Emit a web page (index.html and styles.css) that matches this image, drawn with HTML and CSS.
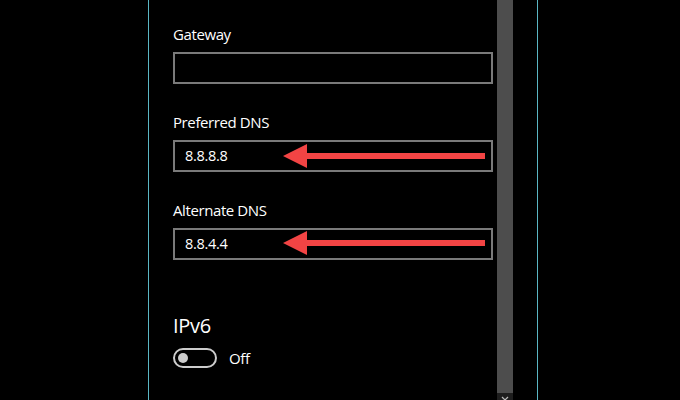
FILE: index.html
```html
<!DOCTYPE html>
<html>
<head>
<meta charset="utf-8">
<link rel="stylesheet" href="styles.css">
</head>
<body>
<div class="frame">
  <div class="gutter"></div>
  <div class="panel">
    <div class="form">
      <div class="group">
        <div class="label">Gateway</div>
        <div class="field"></div>
      </div>
      <div class="group">
        <div class="label">Preferred DNS</div>
        <div class="field">8.8.8.8
          <svg class="arrow" width="320" height="32" viewBox="0 0 320 32"><polygon points="110,16 134,4 134,13 312,13 312,19 134,19 134,28" fill="#f24444"/></svg>
        </div>
      </div>
      <div class="group">
        <div class="label">Alternate DNS</div>
        <div class="field">8.8.4.4
          <svg class="arrow" width="320" height="32" viewBox="0 0 320 32"><polygon points="110,15 134,3 134,12 312,12 312,18 134,18 134,27" fill="#f24444"/></svg>
        </div>
      </div>
      <div class="section">
        <div class="heading">IPv6</div>
        <div class="toggle-row">
          <div class="toggle"><div class="knob"></div></div>
          <span class="state">Off</span>
        </div>
      </div>
    </div>
    <div class="scrollbar">
      <div class="thumb"></div>
      <div class="btn"><svg width="16" height="16" viewBox="0 0 16 16"><path d="M5 4 L8 7 L11 4" stroke="#bbb" stroke-width="1.2" fill="none"/></svg></div>
    </div>
  </div>
</div>
</body>
</html>
```
FILE: styles.css
```css
html, body {
  margin: 0;
  padding: 0;
  background: #000;
  height: 400px;
  overflow: hidden;
}
body {
  font-family: "Open Sans", "Noto Sans", sans-serif;
  color: #fff;
}
.frame {
  display: flex;
  height: 400px;
}
.gutter {
  width: 148px;
  flex: none;
}
.panel {
  width: 388px;
  flex: none;
  border-left: 1px solid #5ab6c4;
  border-right: 1px solid #5ab6c4;
  display: flex;
}
.form {
  width: 320px;
  padding-left: 24px;
  padding-top: 24px;
  flex: none;
}
.group {
  margin-bottom: 28px;
}
.label {
  font-size: 15px;
  line-height: 20px;
  letter-spacing: -0.4px;
  margin-bottom: 8px;
}
.field {
  position: relative;
  box-sizing: border-box;
  height: 32px;
  border: 2px solid #7a7a7a;
  font-size: 14.5px;
  line-height: 28px;
  letter-spacing: -0.3px;
  padding-left: 10px;
}
.arrow {
  position: absolute;
  left: -2px;
  top: -2px;
}
.section {
  padding-top: 24px;
}
.heading {
  font-size: 20px;
  line-height: 28px;
  letter-spacing: -0.3px;
}
.toggle-row {
  display: flex;
  align-items: center;
  margin-top: 8px;
}
.toggle {
  box-sizing: border-box;
  width: 44px;
  height: 20px;
  border: 2px solid #cccccc;
  border-radius: 10px;
  display: flex;
  align-items: center;
  padding-left: 3px;
}
.knob {
  width: 10px;
  height: 10px;
  border-radius: 50%;
  background: #cccccc;
}
.state {
  margin-left: 12px;
  font-size: 15px;
  line-height: 20px;
  letter-spacing: -0.3px;
}
.scrollbar {
  margin-left: 4px;
  width: 16px;
  flex: none;
  display: flex;
  flex-direction: column;
}
.thumb {
  height: 393px;
  background: #4d4d4d;
  flex: none;
}
.btn {
  height: 16px;
  background: #1e1e1e;
  flex: none;
}
.btn svg {
  display: block;
}
```
